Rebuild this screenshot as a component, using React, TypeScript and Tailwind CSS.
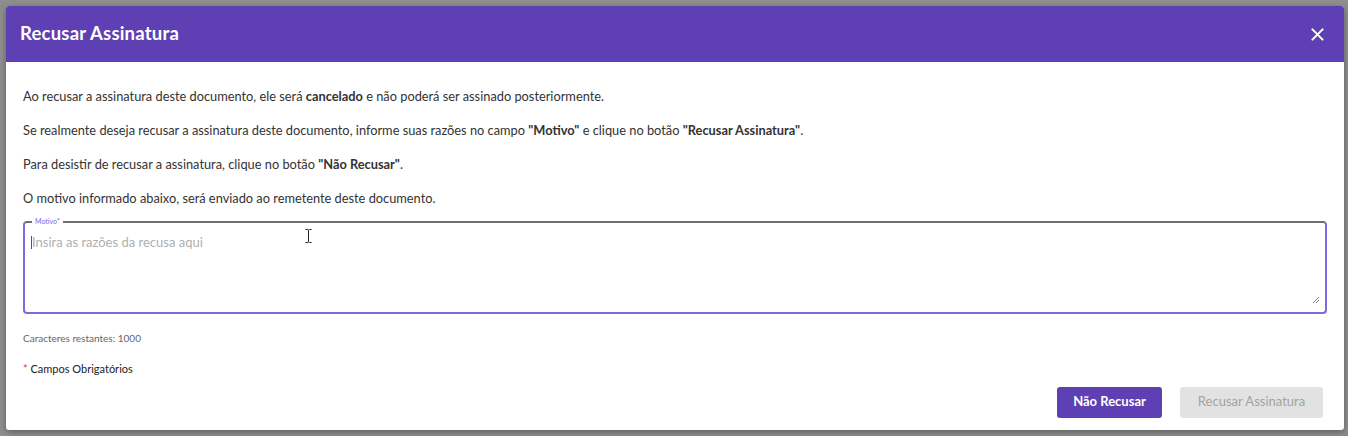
import React from "react";

const font = { fontFamily: "Lato, 'Open Sans', sans-serif" };

export default function App() {
  return (
    <div className="w-[1348px] h-[436px] bg-[#8e8e8e] pt-[6px] pl-[6px]" style={font}>
      <div className="w-[1338px] h-[424px] bg-white rounded-[3px] shadow-[0_2px_6px_rgba(0,0,0,0.35)] flex flex-col overflow-hidden">
        <div className="h-[56px] bg-[#5e3fb4] flex items-center justify-between pl-[14px] pr-[20px]">
          <h2 className="text-white text-[18.5px] font-bold tracking-[0.2px]">Recusar Assinatura</h2>
          <svg width="13" height="13" viewBox="0 0 14 14" className="text-white">
            <path d="M1.5 1.5 L12.5 12.5 M12.5 1.5 L1.5 12.5" stroke="currentColor" strokeWidth="2.2" strokeLinecap="round" />
          </svg>
        </div>
        <div className="flex-1 flex flex-col px-[17px] pt-[26px] text-[12.8px] text-[#333]">
          <p className="leading-[17px]">
            Ao recusar a assinatura deste documento, ele será <b>cancelado</b> e não poderá ser assinado posteriormente.
          </p>
          <p className="leading-[17px] mt-[17px]">
            Se realmente deseja recusar a assinatura deste documento, informe suas razões no campo <b>"Motivo"</b> e clique no botão <b>"Recusar Assinatura"</b>.
          </p>
          <p className="leading-[17px] mt-[16.5px]">
            Para desistir de recusar a assinatura, clique no botão <b>"Não Recusar"</b>.
          </p>
          <p className="leading-[17px] mt-[17px]">
            O motivo informado abaixo, será enviado ao remetente deste documento.
          </p>
          <div className="mt-[14px] h-[93px] border-[2px] border-[#7b6ae6] border-t-[#6f6f6f] rounded-[4px] px-[6px] relative">
            <span className="absolute left-[7px] top-[-7px] bg-white px-[3px] text-[7px] leading-[10px] text-[#7b6ae6]">Motivo*</span>
            <div className="flex items-center mt-[12px]">
              <span className="w-px h-[13px] bg-[#555]" />
              <span className="text-[13px] text-[#b0b0b0] leading-[15px]">Insira as razões da recusa aqui</span>
            </div>
            <svg className="absolute left-[280px] top-[6px]" width="7" height="14" viewBox="0 0 7 14">
              <path d="M0.5 0.5 H2.5 Q3.5 0.5 3.5 1.5 V12.5 Q3.5 13.5 2.5 13.5 H0.5 M6.5 0.5 H4.5 Q3.5 0.5 3.5 1.5 M3.5 12.5 Q3.5 13.5 4.5 13.5 H6.5" stroke="#222" strokeWidth="1" fill="none" />
            </svg>
            <svg className="absolute right-[5px] bottom-[8px]" width="8" height="8" viewBox="0 0 8 8">
              <path d="M7 1 L1 7 M7 4 L4 7" stroke="#888" strokeWidth="1" />
            </svg>
          </div>
          <p className="mt-[18px] text-[10px] leading-[12px] text-[#666]">Caracteres restantes: 1000</p>
          <p className="mt-[18px] text-[11px] leading-[13px] text-[#222]">
            <span className="text-[#e53935]">*</span> Campos Obrigatórios
          </p>
          <div className="flex justify-end gap-[18px] mt-[12px] pr-[4px]">
            <button className="w-[105px] h-[31px] rounded-[3px] bg-[#5e3fb4] text-white text-[13px] font-bold">Não Recusar</button>
            <button className="w-[143px] h-[31px] rounded-[3px] bg-[#e2e2e2] text-[#a2a2a2] text-[13px]">Recusar Assinatura</button>
          </div>
        </div>
      </div>
    </div>
  );
}
